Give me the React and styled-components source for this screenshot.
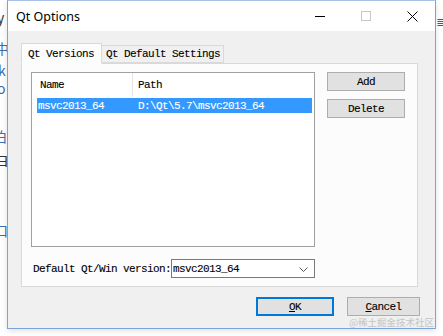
import React from 'react';
import styled, { createGlobalStyle, css } from 'styled-components';

const GlobalStyle = createGlobalStyle`
  html, body {
    margin: 0;
    padding: 0;
    background: #ffffff;
  }
  body {
    width: 443px;
    height: 336px;
    overflow: hidden;
  }
`;

// SimSun-like half width text: 6px per glyph, tall letters
const monoText = css`
  font-family: "Liberation Mono", "DejaVu Sans Mono", monospace;
  font-size: 11px;
  letter-spacing: -0.6px;
  -webkit-text-stroke: 0.1px currentColor;
`;

const Desktop = styled.div`
  position: relative;
  width: 443px;
  height: 336px;
  background: #ffffff;
  overflow: hidden;
`;

const Behind = styled.span`
  position: absolute;
  left: ${(p) => p.x}px;
  top: ${(p) => p.y}px;
  font-family: "Noto Sans CJK SC", "Noto Sans", sans-serif;
  font-size: 14px;
  line-height: 16px;
  color: ${(p) => p.color || '#3a6fb0'};
`;

const Window = styled.div`
  position: absolute;
  left: 7px;
  top: 0;
  width: 427px;
  height: 327px;
  border: 1px solid #7aa3dc;
  border-top-color: #a8c2e8;
  background: #f0f0f0;
  display: flex;
  flex-direction: column;
  box-shadow: 0 2px 6px rgba(0, 0, 0, 0.12);
`;

const TitleBar = styled.div`
  height: 30px;
  background: #ffffff;
  display: flex;
  align-items: center;
  padding-left: 8px;
  flex-shrink: 0;
`;

const Title = styled.div`
  flex: 1;
  font-family: "Noto Sans", sans-serif;
  font-size: 12.5px;
  color: #000;
  padding-top: 1px;
`;

const Caption = styled.div`
  width: 46px;
  height: 30px;
  display: flex;
  align-items: center;
  justify-content: center;
`;

const Body = styled.div`
  flex: 1;
  display: flex;
  flex-direction: column;
  padding: 12px 17px 0 13px;
`;

const TabRow = styled.div`
  display: flex;
  align-items: flex-end;
  height: 20px;
  position: relative;
  z-index: 1;
`;

const Tab = styled.div`
  ${monoText};
  color: #000;
  white-space: nowrap;
  border: 1px solid #d9d9d9;
  box-sizing: border-box;
  display: flex;
  align-items: center;
  background: ${(p) => (p.active ? '#fcfcfc' : '#f0f0f0')};
  height: ${(p) => (p.active ? '21px' : '18px')};
  margin-bottom: ${(p) => (p.active ? '-1px' : '0')};
  border-bottom-color: ${(p) => (p.active ? '#fcfcfc' : '#d9d9d9')};
  border-left-width: ${(p) => (p.first ? '1px' : '0')};
  padding: 0 0 0 ${(p) => (p.active ? '6px' : '4px')};
  width: ${(p) => p.w}px;
`;

const Pane = styled.div`
  height: 224px;
  box-sizing: border-box;
  border: 1px solid #d9d9d9;
  background: #fcfcfc;
  padding: 8px 11px 9px 9px;
  display: flex;
  flex-direction: column;
`;

const PaneTop = styled.div`
  display: flex;
  gap: 12px;
`;

const List = styled.div`
  width: 284px;
  height: 175px;
  box-sizing: border-box;
  border: 1px solid #a0a0a0;
  background: #ffffff;
  padding: 0 2px 0 5px;
`;

const Header = styled.div`
  display: flex;
  height: 24px;
  align-items: center;
  ${monoText};
  color: #000;
`;

const HeadCell = styled.div`
  height: 100%;
  display: flex;
  align-items: center;
  box-sizing: border-box;
  padding-left: ${(p) => p.pad}px;
  width: ${(p) => (p.w ? `${p.w}px` : 'auto')};
  flex: ${(p) => (p.w ? 'none' : 1)};
  border-right: ${(p) => (p.divider ? '1px solid #e5e5e5' : 'none')};
`;

const Row = styled.div`
  display: flex;
  height: 15px;
  align-items: center;
  background: ${(p) => (p.selected ? '#3399ff' : 'transparent')};
  color: ${(p) => (p.selected ? '#ffffff' : '#000')};
  ${monoText};
  margin-top: 1px;
`;

const Cell = styled.div`
  width: ${(p) => (p.w ? `${p.w}px` : 'auto')};
  flex: ${(p) => (p.w ? 'none' : 1)};
  padding-left: ${(p) => p.pad}px;
  box-sizing: border-box;
  white-space: nowrap;
`;

const SideButtons = styled.div`
  display: flex;
  flex-direction: column;
  gap: 8px;
`;

const Button = styled.div`
  width: ${(p) => p.w || 78}px;
  height: ${(p) => p.h || 19}px;
  box-sizing: border-box;
  background: #e1e1e1;
  border: ${(p) => (p.primary ? '2px solid #0078d7' : '1px solid #adadad')};
  display: flex;
  align-items: center;
  justify-content: center;
  ${monoText};
  color: #000;
  padding-top: 1px;

  u {
    text-decoration: underline;
    text-underline-offset: 1px;
  }
`;

const ComboRow = styled.div`
  margin-top: 12px;
  display: flex;
  align-items: center;
  padding-left: 2px;
  gap: 4px;
`;

const Label = styled.div`
  ${monoText};
  color: #000;
  width: 134px;
  white-space: nowrap;
`;

const Combo = styled.div`
  width: 144px;
  height: 19px;
  box-sizing: border-box;
  border: 1px solid #7a7a7a;
  background: #ffffff;
  display: flex;
  align-items: center;
  justify-content: space-between;
  padding: 1px 6px 0 1px;
  ${monoText};
  color: #000;
`;

const Footer = styled.div`
  display: flex;
  justify-content: flex-end;
  gap: 13px;
  margin-top: 10px;
  margin-right: -2px;
`;

const Watermark = styled.div`
  position: absolute;
  left: 349px;
  top: 316px;
  font-family: "Noto Sans CJK SC", "Noto Sans", sans-serif;
  font-size: 9.5px;
  line-height: 12px;
  color: #c4c4c4;
  white-space: nowrap;
`;

export default function App() {
  return (
    <Desktop>
      <GlobalStyle />
      <Behind x={-3} y={9} color="#333">y</Behind>
      <Behind x={-5} y={40}>中</Behind>
      <Behind x={-2} y={62}>k</Behind>
      <Behind x={-3} y={80}>o</Behind>
      <Behind x={-7} y={128}>伯</Behind>
      <Behind x={-5} y={152} color="#333">ヨ</Behind>
      <Behind x={-6} y={222}>口</Behind>
      <Behind x={436} y={12} color="#555">≣</Behind>
      <Window>
        <TitleBar>
          <Title>Qt Options</Title>
          <Caption>
            <svg width="10" height="10" viewBox="0 0 10 10">
              <path d="M0 5.5h10" stroke="#000" strokeWidth="1" />
            </svg>
          </Caption>
          <Caption>
            <svg width="10" height="10" viewBox="0 0 10 10">
              <rect x="0.5" y="0.5" width="9" height="9" fill="none" stroke="#c6c6c6" />
            </svg>
          </Caption>
          <Caption>
            <svg width="11" height="11" viewBox="0 0 11 11">
              <path d="M0.5 0.5l10 10M10.5 0.5l-10 10" stroke="#000" strokeWidth="1" />
            </svg>
          </Caption>
        </TitleBar>
        <Body>
          <TabRow>
            <Tab active first w={81}>Qt Versions</Tab>
            <Tab w={122}>Qt Default Settings</Tab>
          </TabRow>
          <Pane>
            <PaneTop>
              <List>
                <Header>
                  <HeadCell w={96} pad={3} divider>Name</HeadCell>
                  <HeadCell pad={5}>Path</HeadCell>
                </Header>
                <Row selected>
                  <Cell w={96} pad={1}>msvc2013_64</Cell>
                  <Cell pad={5}>D:\Qt\5.7\msvc2013_64</Cell>
                </Row>
              </List>
              <SideButtons>
                <Button>Add</Button>
                <Button>Delete</Button>
              </SideButtons>
            </PaneTop>
            <ComboRow>
              <Label>Default Qt/Win version:</Label>
              <Combo>
                <span>msvc2013_64</span>
                <svg width="9" height="5" viewBox="0 0 9 5">
                  <path d="M0.5 0.5l4 4 4-4" fill="none" stroke="#555" strokeWidth="1" />
                </svg>
              </Combo>
            </ComboRow>
          </Pane>
          <Footer>
            <Button primary w={78} h={19}><span><u>O</u>K</span></Button>
            <Button w={73} h={19}><span><u>C</u>ancel</span></Button>
          </Footer>
        </Body>
      </Window>
      <Watermark>@稀土掘金技术社区</Watermark>
    </Desktop>
  );
}
